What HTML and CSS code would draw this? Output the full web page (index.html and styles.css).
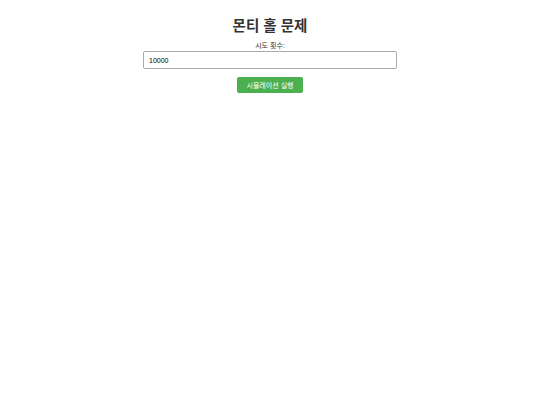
FILE: index.html
```html
<!DOCTYPE html>
<html lang="ko">
<head>
    <meta charset="UTF-8">
    <meta name="viewport" content="width=device-width, initial-scale=1.0">
    <title>몬티 홀 문제</title>
    <link rel="stylesheet" href="styles.css">
</head>
<body>
    <h1>몬티 홀 문제</h1>

    <!-- 입력 영역 -->
    <div class="container">
        <label for="trials">시도 횟수:</label>
        <input type="number" id="trials" value="10000">
        <button id="run">시뮬레이션 실행</button>
    </div>

    <div id="result"></div>
</body>
</html>
```

FILE: styles.css
```css
/* GLOBAL STYLES */
body {
    font-family: Arial, "Liberation Sans", "Noto Sans CJK KR", sans-serif;
    text-align: center;
    margin: 0;
    padding-top: 16px;
    background-color: #fff;
    color: #333;
}

h1 {
    font-size: 14.5px;
    line-height: 20px;
    margin: 0 0 5px;
    color: #333;
}

.container {
    display: flex;
    flex-direction: column;
    align-items: center;
}

label {
    font-size: 7px;
    line-height: 9px;
    color: #333;
    margin-bottom: 1px;
}

input {
    box-sizing: border-box;
    width: 254px;
    height: 18px;
    padding: 0 5px;
    font-family: Arial, "Liberation Sans", sans-serif;
    font-size: 7px;
    color: #000;
    border: 1px solid #aaa;
    border-radius: 2px;
    margin: 0 0 8px;
}

button {
    height: 16px;
    padding: 0 9px;
    font-family: Arial, "Liberation Sans", "Noto Sans CJK KR", sans-serif;
    font-size: 7px;
    color: #fff;
    background-color: #4caf50;
    border: none;
    border-radius: 2px;
    cursor: pointer;
}

#result {
    margin-top: 14px;
    font-size: 9px;
}
```
